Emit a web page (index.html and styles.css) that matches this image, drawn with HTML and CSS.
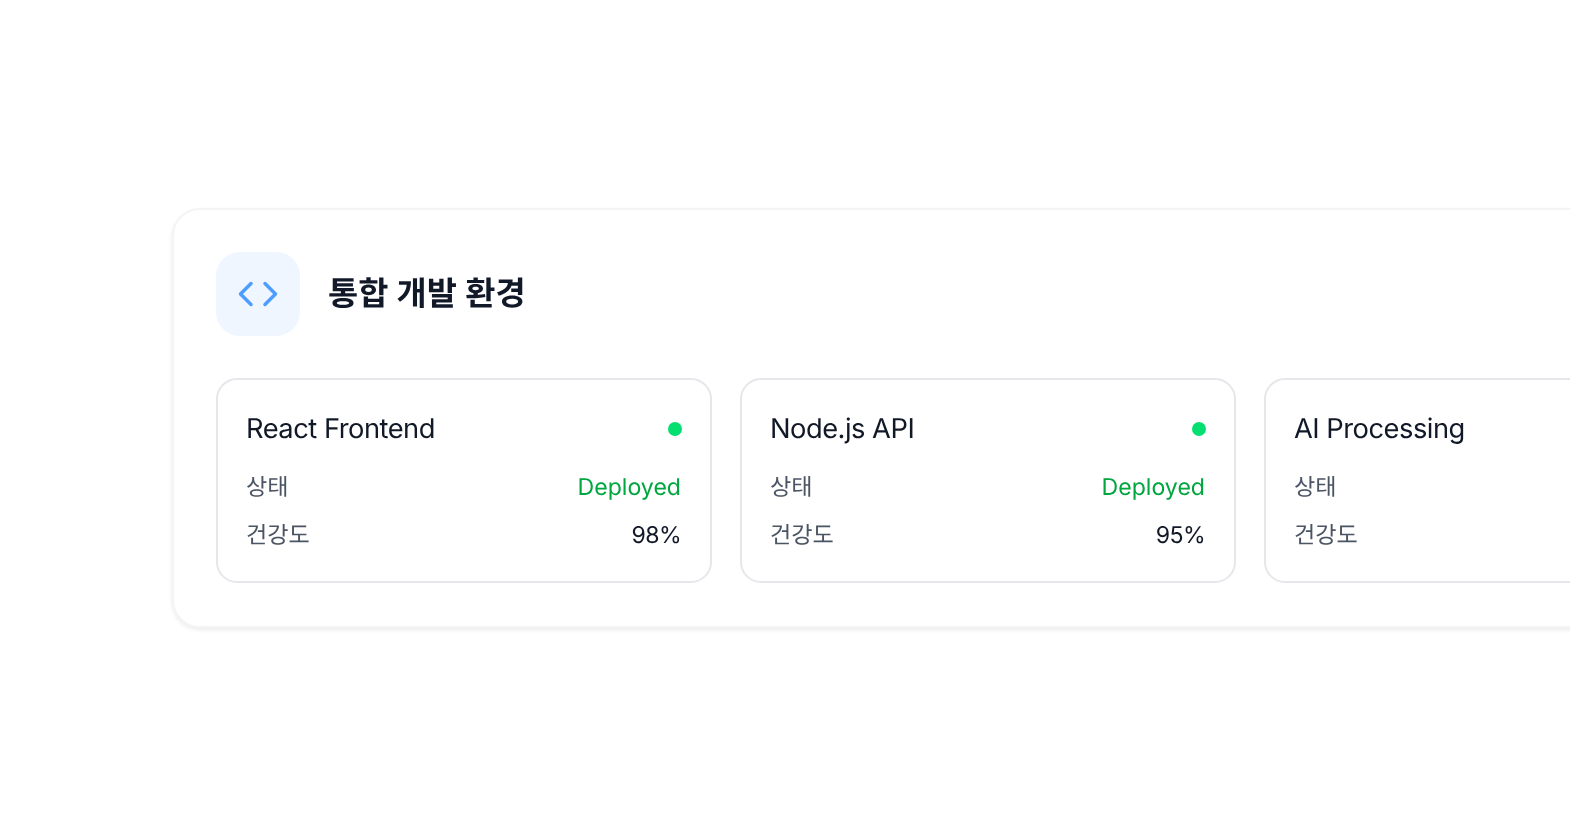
FILE: index.html
```html
<!DOCTYPE html>
<html lang="ko">
<head>
    <meta charset="UTF-8">
    <title>통합 개발 환경</title>
    <link rel="stylesheet" href="styles.css">
</head>
<body>
<div class="page">
    <section class="panel">
        <div class="panel-head">
            <div class="icon-box">
                <svg width="42" height="42" viewBox="0 0 24 24" fill="none" stroke="#4d9dff" stroke-width="2" stroke-linecap="round" stroke-linejoin="round">
                    <polyline points="16 18 22 12 16 6"/>
                    <polyline points="8 6 2 12 8 18"/>
                </svg>
            </div>
            <h2>통합 개발 환경</h2>
        </div>
        <div class="services">
            <div class="service">
                <div class="service-top">
                    <span class="name">React Frontend</span>
                    <span class="dot"></span>
                </div>
                <div class="row"><span class="label">상태</span><span class="ok">Deployed</span></div>
                <div class="row"><span class="label">건강도</span><span class="value">98%</span></div>
            </div>
            <div class="service">
                <div class="service-top">
                    <span class="name">Node.js API</span>
                    <span class="dot"></span>
                </div>
                <div class="row"><span class="label">상태</span><span class="ok">Deployed</span></div>
                <div class="row"><span class="label">건강도</span><span class="value">95%</span></div>
            </div>
            <div class="service">
                <div class="service-top">
                    <span class="name">AI Processing</span>
                    <span class="dot"></span>
                </div>
                <div class="row"><span class="label">상태</span><span class="ok">Deployed</span></div>
                <div class="row"><span class="label">건강도</span><span class="value">92%</span></div>
            </div>
        </div>
    </section>
</div>
</body>
</html>
```

FILE: styles.css
```css
* {
    padding: 0;
    margin: 0;
    box-sizing: border-box;
}
html, body {
    height: 100%;
    overflow: hidden;
    background-color: #fff;
}
body {
    font-family: Inter, "Noto Sans CJK KR", sans-serif;
    color: #111827;
    text-rendering: geometricPrecision;
}
.page {
    padding: 208px 0 0 172px;
}
.panel {
    width: 1660px;
    padding: 42px 42px 43px;
    border: 2px solid #f3f4f6;
    border-radius: 28px;
    background-color: #fff;
    box-shadow: 0 2px 4px rgba(0, 0, 0, 0.08);
    will-change: transform;
}
.panel-head {
    display: flex;
    align-items: center;
    gap: 28px;
    margin-bottom: 42px;
}
.icon-box {
    display: flex;
    align-items: center;
    justify-content: center;
    width: 84px;
    height: 84px;
    border-radius: 24px;
    background-color: #eff6ff;
}
h2 {
    font-size: 32.8px;
    font-weight: 600;
    line-height: 47px;
    margin-bottom: 2px;
}
.services {
    display: grid;
    grid-template-columns: repeat(3, 496px);
    gap: 28px;
}
.service {
    padding: 28px 29px 28px 28px;
    border: 2px solid #e5e7eb;
    border-radius: 21px;
    background-color: #fff;
}
.service-top {
    display: flex;
    align-items: center;
    justify-content: space-between;
    margin-bottom: 20px;
}
.name {
    font-size: 27.3px;
    letter-spacing: -0.5px;
    line-height: 42px;
}
.dot {
    width: 14px;
    height: 14px;
    margin-right: -1px;
    border-radius: 50%;
    background-color: #05df72;
}
.row {
    display: flex;
    align-items: center;
    justify-content: space-between;
    font-size: 23.1px;
    line-height: 35px;
    margin-top: 13px;
}
.row:first-of-type {
    margin-top: 0;
}
.label {
    color: #4b5563;
}
.ok {
    color: #00a63e;
}
.value {
    color: #111827;
    letter-spacing: -0.6px;
}
```
